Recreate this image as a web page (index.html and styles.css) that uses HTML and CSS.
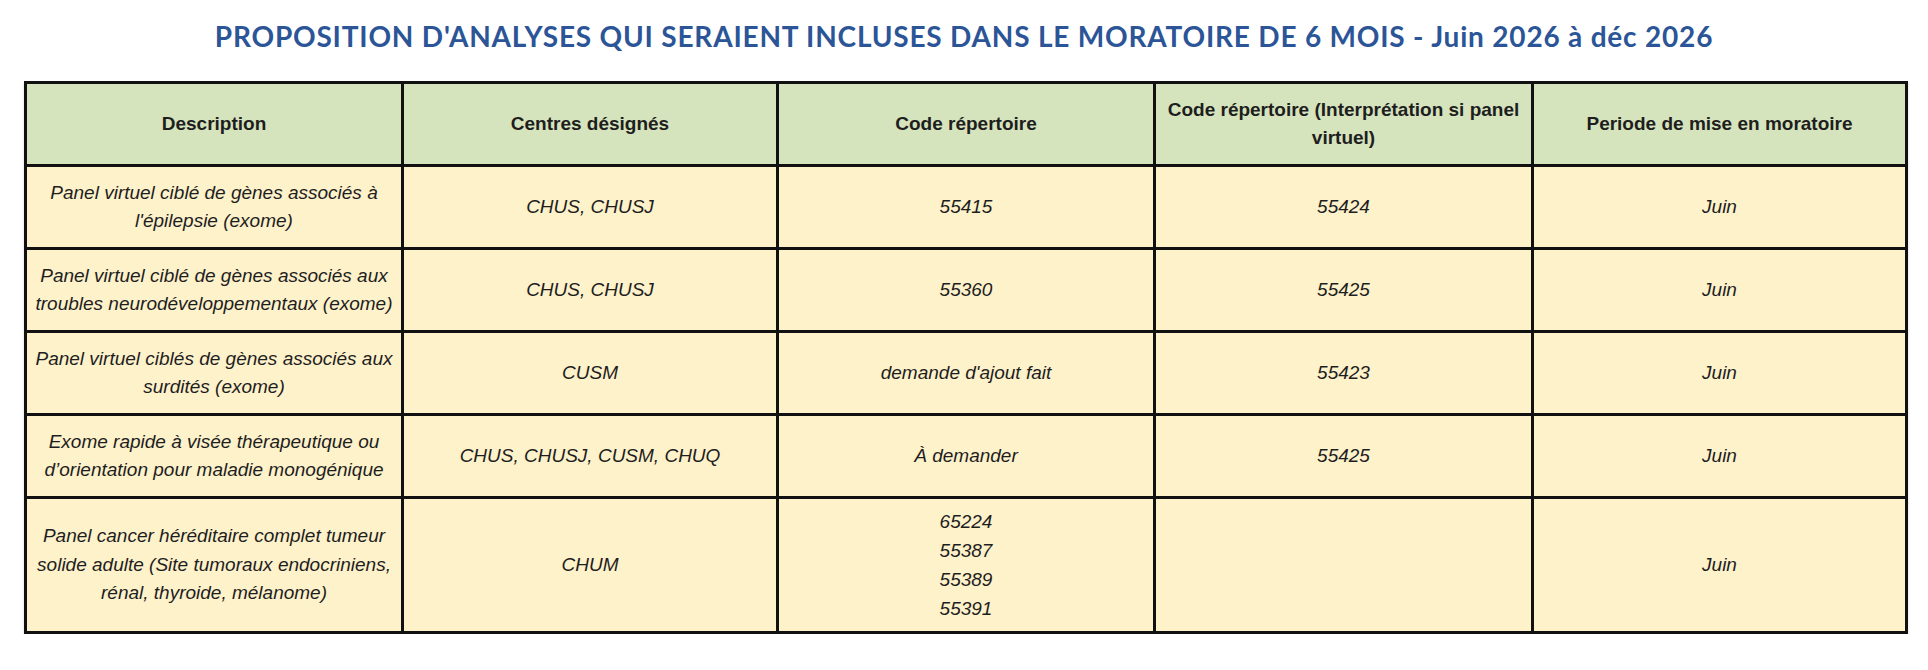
FILE: index.html
```html
<!DOCTYPE html>
<html lang="fr">
<head>
<meta charset="utf-8">
<title>Proposition d'analyses – moratoire</title>
<link rel="stylesheet" href="styles.css">
</head>
<body>
<main class="page">
  <h1 class="title">PROPOSITION D'ANALYSES QUI SERAIENT INCLUSES DANS LE MORATOIRE DE 6 MOIS - Juin 2026 à déc 2026</h1>
  <table class="grid">
    <colgroup>
      <col class="c1"><col class="c2"><col class="c3"><col class="c4"><col class="c5">
    </colgroup>
    <thead>
      <tr class="head">
        <th>Description</th>
        <th>Centres désignés</th>
        <th>Code répertoire</th>
        <th>Code répertoire (Interprétation si panel<br>virtuel)</th>
        <th>Periode de mise en moratoire</th>
      </tr>
    </thead>
    <tbody>
      <tr class="row">
        <td>Panel virtuel ciblé de gènes associés à<br>l'épilepsie (exome)</td>
        <td>CHUS, CHUSJ</td>
        <td>55415</td>
        <td>55424</td>
        <td>Juin</td>
      </tr>
      <tr class="row">
        <td>Panel virtuel ciblé de gènes associés aux<br>troubles neurodéveloppementaux (exome)</td>
        <td>CHUS, CHUSJ</td>
        <td>55360</td>
        <td>55425</td>
        <td>Juin</td>
      </tr>
      <tr class="row">
        <td>Panel virtuel ciblés de gènes associés aux<br>surdités (exome)</td>
        <td>CUSM</td>
        <td>demande d'ajout fait</td>
        <td>55423</td>
        <td>Juin</td>
      </tr>
      <tr class="row">
        <td>Exome rapide à visée thérapeutique ou<br>d’orientation pour maladie monogénique</td>
        <td>CHUS, CHUSJ, CUSM, CHUQ</td>
        <td>À demander</td>
        <td>55425</td>
        <td>Juin</td>
      </tr>
      <tr class="row tall">
        <td>Panel cancer héréditaire complet tumeur<br>solide adulte (Site tumoraux endocriniens,<br>rénal, thyroide, mélanome)</td>
        <td>CHUM</td>
        <td class="codes">65224<br>55387<br>55389<br>55391</td>
        <td></td>
        <td>Juin</td>
      </tr>
    </tbody>
  </table>
</main>
</body>
</html>
```

FILE: styles.css
```css
html, body {
  margin: 0;
  padding: 0;
  background: #ffffff;
}

.page {
  padding: 0 24px 0 24px;
  font-family: "Liberation Sans", Arial, sans-serif;
  color: #1e1e1e;
}

.title {
  margin: 0;
  padding-top: 18px;
  height: 81px;
  box-sizing: border-box;
  text-align: center;
  font-family: Lato, "Open Sans", sans-serif;
  font-weight: 700;
  font-size: 28px;
  letter-spacing: 0.8px;
  line-height: 36px;
  color: #2b5597;
}

.grid {
  width: 1881px;
  border-collapse: collapse;
  table-layout: fixed;
  font-size: 19px;
  line-height: 28.5px;
  box-shadow: 0 2px 2px rgba(0, 0, 0, 0.18);
}

.c1 { width: 377px; }
.c2 { width: 375px; }
.c3 { width: 377px; }
.c4 { width: 378px; }
.c5 { width: 374px; }

.grid th,
.grid td {
  border: 3px solid #111111;
  padding: 0 4px;
  text-align: center;
  vertical-align: middle;
}

.head th {
  background: #d6e4bd;
  font-weight: 700;
  height: 83px;
  box-sizing: border-box;
}

.row td {
  background: #fef2cb;
  font-style: italic;
  height: 83px;
  box-sizing: border-box;
}

.row.tall td {
  height: 135px;
}

.codes {
  line-height: 29px;
}
```
